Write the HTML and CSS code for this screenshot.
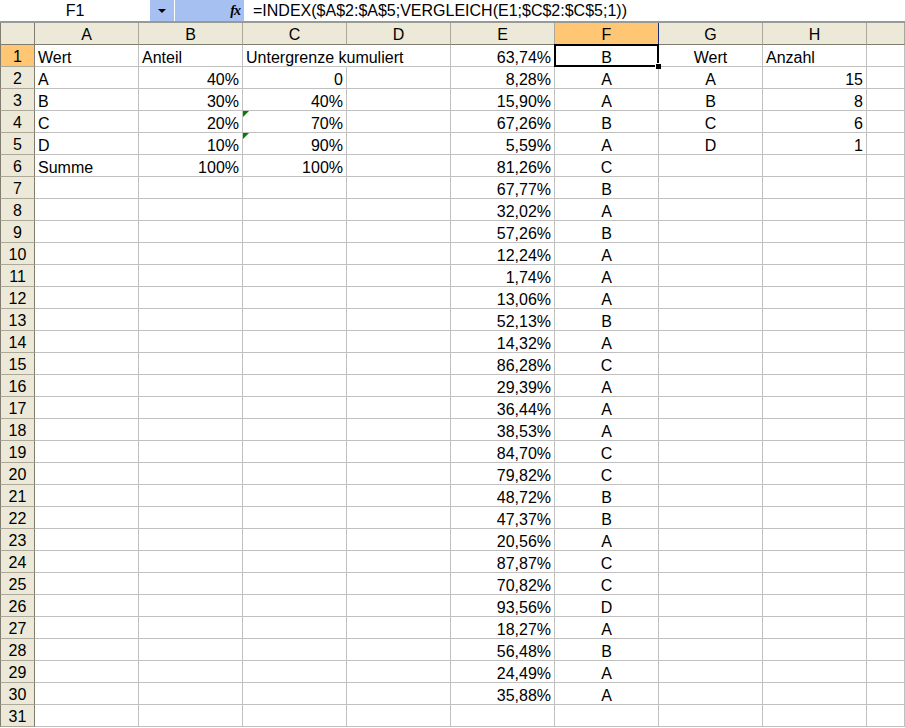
FILE: index.html
```html
<!DOCTYPE html>
<html lang="de">
<head>
  <meta charset="UTF-8">
  <title>Tabelle1</title>
  <link rel="stylesheet" href="styles.css">
</head>
<body>
  <div class="formula-bar">
    <div class="name-box">F1</div>
    <div class="name-drop"><span class="tri"></span></div>
    <div class="fx-box"><span class="fx">fx</span></div>
    <div class="formula">=INDEX($A$2:$A$5;VERGLEICH(E1;$C$2:$C$5;1))</div>
  </div>

  <div class="sheet" id="sheet"></div>

  <script>
    // column E / F values for rows 1-30
    var randoms = [
      ['63,74%','B'],['8,28%','A'],['15,90%','A'],['67,26%','B'],['5,59%','A'],
      ['81,26%','C'],['67,77%','B'],['32,02%','A'],['57,26%','B'],['12,24%','A'],
      ['1,74%','A'],['13,06%','A'],['52,13%','B'],['14,32%','A'],['86,28%','C'],
      ['29,39%','A'],['36,44%','A'],['38,53%','A'],['84,70%','C'],['79,82%','C'],
      ['48,72%','B'],['47,37%','B'],['20,56%','A'],['87,87%','C'],['70,82%','C'],
      ['93,56%','D'],['18,27%','A'],['56,48%','B'],['24,49%','A'],['35,88%','A']
    ];

    // fixed cells: "row,col" -> [text, align, extra class]
    var cells = {
      '1,A': ['Wert', 'l'], '1,B': ['Anteil', 'l'], '1,C': ['Untergrenze kumuliert', 'l', 'spill'],
      '1,G': ['Wert', 'c'], '1,H': ['Anzahl', 'l'],
      '2,A': ['A', 'l'], '2,B': ['40%', 'r'], '2,C': ['0', 'r'], '2,G': ['A', 'c'], '2,H': ['15', 'r'],
      '3,A': ['B', 'l'], '3,B': ['30%', 'r'], '3,C': ['40%', 'r'], '3,G': ['B', 'c'], '3,H': ['8', 'r'],
      '4,A': ['C', 'l'], '4,B': ['20%', 'r'], '4,C': ['70%', 'r', 'note'], '4,G': ['C', 'c'], '4,H': ['6', 'r'],
      '5,A': ['D', 'l'], '5,B': ['10%', 'r'], '5,C': ['90%', 'r', 'note'], '5,G': ['D', 'c'], '5,H': ['1', 'r'],
      '6,A': ['Summe', 'l'], '6,B': ['100%', 'r'], '6,C': ['100%', 'r']
    };

    var cols = ['A','B','C','D','E','F','G','H',''];
    var sheet = document.getElementById('sheet');

    function add(cls, text) {
      var d = document.createElement('div');
      d.className = cls;
      if (text) d.textContent = text;
      sheet.appendChild(d);
      return d;
    }

    // header row
    add('hd corner');
    cols.forEach(function(c) {
      add('hd col' + (c === 'F' ? ' active' : ''), c);
    });

    for (var r = 1; r <= 31; r++) {
      add('hd row' + (r === 1 ? ' active' : ''), String(r));
      cols.forEach(function(c) {
        var cls = 'cell';
        var text = '';
        var info = cells[r + ',' + c];
        if (info) {
          text = info[0];
          cls += ' ' + info[1];
          if (info[2]) cls += ' ' + info[2];
        } else if ((c === 'E' || c === 'F') && r <= 30) {
          text = c === 'E' ? randoms[r - 1][0] : randoms[r - 1][1];
          cls += c === 'E' ? ' r' : ' c';
        }
        var d = add(cls, text);
        if (r === 1 && c === 'F') {
          d.classList.add('selected');
          var box = document.createElement('span');
          box.className = 'sel-box';
          d.appendChild(box);
        }
      });
    }
  </script>
</body>
</html>
```

FILE: styles.css
```css
html, body {
  margin: 0;
  padding: 0;
  overflow: hidden;
  background: #fff;
}
body {
  font-family: "Liberation Sans", Arial, sans-serif;
  font-size: 16px;
  color: #000;
  width: 905px;
  height: 728px;
}

/* formula bar */
.formula-bar {
  display: flex;
  height: 21px;
  border-bottom: 2px solid #9a9a94;
  background: #fff;
}
.name-box {
  width: 150px;
  text-align: center;
  line-height: 21px;
}
.name-drop {
  width: 24px;
  background: #a6c0f2;
  border-right: 1px solid #fff;
  display: flex;
  align-items: center;
  justify-content: center;
}
.tri {
  width: 0;
  height: 0;
  border-left: 4px solid transparent;
  border-right: 4px solid transparent;
  border-top: 4px solid #000;
  margin-top: 1px;
}
.fx-box {
  width: 69px;
  background: #a6c0f2;
  text-align: right;
}
.fx {
  display: inline-block;
  font-family: "Liberation Serif", "Times New Roman", serif;
  font-style: italic;
  font-weight: bold;
  font-size: 14px;
  line-height: 21px;
  margin-right: 4px;
  letter-spacing: -1px;
}
.formula {
  flex: 1;
  padding-left: 9px;
  line-height: 21px;
  white-space: nowrap;
}

/* sheet grid */
.sheet {
  display: grid;
  grid-template-columns: 35px repeat(8, 104px) 1fr;
  grid-auto-rows: 22px;
}
.hd {
  background: #ece9d8;
  border-right: 1px solid #aca899;
  border-bottom: 1px solid #aca899;
  text-align: center;
  line-height: 24px;
  box-sizing: border-box;
  overflow: hidden;
}
.hd.row {
  border-left: 1px solid #807d70;
  border-right-color: #807d70;
}
.hd.corner {
  border-left: 1px solid #807d70;
  border-right-color: #807d70;
  border-bottom-color: #807d70;
}
.hd.col {
  border-bottom-color: #807d70;
}
.hd.active {
  background: #ffc674;
}
.hd.col.active {
  border-right-color: #1c2a80;
}
.cell {
  position: relative;
  border-right: 1px solid #c0c0c0;
  border-bottom: 1px solid #c0c0c0;
  box-sizing: border-box;
  line-height: 25px;
  white-space: nowrap;
  padding: 0 3px;
  overflow: hidden;
}
.cell.l { text-align: left; }
.cell.r { text-align: right; }
.cell.c { text-align: center; }
.cell.spill {
  overflow: visible;
  border-right-color: transparent;
  z-index: 1;
}
.cell.note::before {
  content: "";
  position: absolute;
  top: 0;
  left: 0;
  border-top: 6px solid #008000;
  border-right: 6px solid transparent;
}
.cell.selected {
  overflow: visible;
  z-index: 2;
}
.sel-box {
  position: absolute;
  top: -1px;
  left: -1px;
  right: -1px;
  bottom: -1px;
  border: 2px solid #000;
}
.sel-box::after {
  content: "";
  position: absolute;
  right: -4px;
  bottom: -4px;
  width: 5px;
  height: 5px;
  background: #000;
  border-left: 1px solid #fff;
  border-top: 1px solid #fff;
}
```
